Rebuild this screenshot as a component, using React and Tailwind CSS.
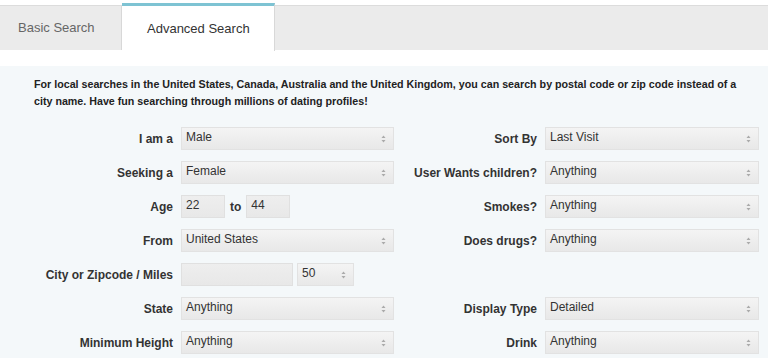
import { useState } from "react";

const font = "font-[family-name:'Liberation_Sans',Arial,sans-serif]";

const Arrows = () => (
  <svg width="5" height="8" viewBox="0 0 5 8" className="shrink-0">
    <path d="M2.5 0.5 L4.5 3 L0.5 3 Z" fill="#aaa" />
    <path d="M2.5 7.5 L4.5 5 L0.5 5 Z" fill="#aaa" />
  </svg>
);

const FakeSelect = ({ value, width = "w-[213px]" }) => (
  <div className={`${width} h-[23px] flex items-center justify-between pl-[4px] pr-[7px] border border-[#e2e2e2] bg-gradient-to-b from-[#f4f4f4] to-[#e8e8e8] text-[12px] text-[#333] leading-none`}>
    <span className="-mt-[3px]">{value}</span>
    <Arrows />
  </div>
);

const TextBox = ({ value, width }) => (
  <div className={`${width} h-[23px] flex items-center pl-[4px] border border-[#e0e0e0] bg-gradient-to-b from-[#eeeeee] to-[#e8e8e8] text-[12px] text-[#333] leading-none`}>
    <span className="-mt-[3px]">{value}</span>
  </div>
);

const Label = ({ children, width }) => (
  <div className={`${width} text-right pr-[8px] pt-[6px] text-[12px] font-bold text-[#333] leading-none`}>
    {children}
  </div>
);

const rows = [
  {
    left: ["I am a", <FakeSelect value="Male" />],
    right: ["Sort By", <FakeSelect value="Last Visit" width="w-[214px]" />],
  },
  {
    left: ["Seeking a", <FakeSelect value="Female" />],
    right: ["User Wants children?", <FakeSelect value="Anything" width="w-[214px]" />],
  },
  {
    left: [
      "Age",
      <div className="flex items-center">
        <TextBox value="22" width="w-[44px]" />
        <span className="mx-[5px] text-[12px] font-bold text-[#333]">to</span>
        <TextBox value="44" width="w-[44px]" />
      </div>,
    ],
    right: ["Smokes?", <FakeSelect value="Anything" width="w-[214px]" />],
  },
  {
    left: ["From", <FakeSelect value="United States" />],
    right: ["Does drugs?", <FakeSelect value="Anything" width="w-[214px]" />],
  },
  {
    left: [
      "City or Zipcode / Miles",
      <div className="flex items-center gap-[4px]">
        <TextBox value="" width="w-[112px]" />
        <FakeSelect value="50" width="w-[57px]" />
      </div>,
    ],
    right: null,
  },
  {
    left: ["State", <FakeSelect value="Anything" />],
    right: ["Display Type", <FakeSelect value="Detailed" width="w-[214px]" />],
  },
  {
    left: ["Minimum Height", <FakeSelect value="Anything" />],
    right: ["Drink", <FakeSelect value="Anything" width="w-[214px]" />],
  },
];

export default function App() {
  const [tab, setTab] = useState("advanced");

  return (
    <div className={`w-[768px] h-[358px] overflow-hidden bg-white ${font}`}>
      {/* tabs */}
      <div className="mt-[5px] h-[45px] flex bg-[#ebebeb] border-t border-[#dcdcdc]">
        <button
          type="button"
          onClick={() => setTab("basic")}
          className="w-[122px] h-full pl-[18px] text-left text-[13px] text-[#666] border-r border-[#d8d8d8]"
        >
          Basic Search
        </button>
        <button
          type="button"
          onClick={() => setTab("advanced")}
          className={`w-[153px] -mt-[3px] h-[48px] pl-[25px] text-left text-[13px] text-[#333] border-r border-[#d8d8d8] ${tab === "advanced" ? "bg-white border-t-[3px] border-t-[#7ec3d3]" : ""}`}
        >
          Advanced Search
        </button>
      </div>

      {/* panel */}
      <div className="mt-[16px] bg-[#f4f8fa] h-[300px]">
        <p className="pl-[34px] pr-[20px] pt-[10px] text-[10.7px] font-bold text-[#222] leading-[17px]">
          For local searches in the United States, Canada, Australia and the United Kingdom, you can search by postal code or zip code instead of a city name. Have fun searching through millions of dating profiles!
        </p>

        <div className="mt-[17px] flex flex-col gap-[11px]">
          {rows.map((row, i) => (
            <div key={i} className="flex h-[23px]">
              <div className="flex w-[394px]">
                <Label width="w-[181px]">{row.left[0]}</Label>
                {row.left[1]}
              </div>
              {row.right && (
                <div className="flex">
                  <Label width="w-[151px]">{row.right[0]}</Label>
                  {row.right[1]}
                </div>
              )}
            </div>
          ))}
        </div>
      </div>
    </div>
  );
}
